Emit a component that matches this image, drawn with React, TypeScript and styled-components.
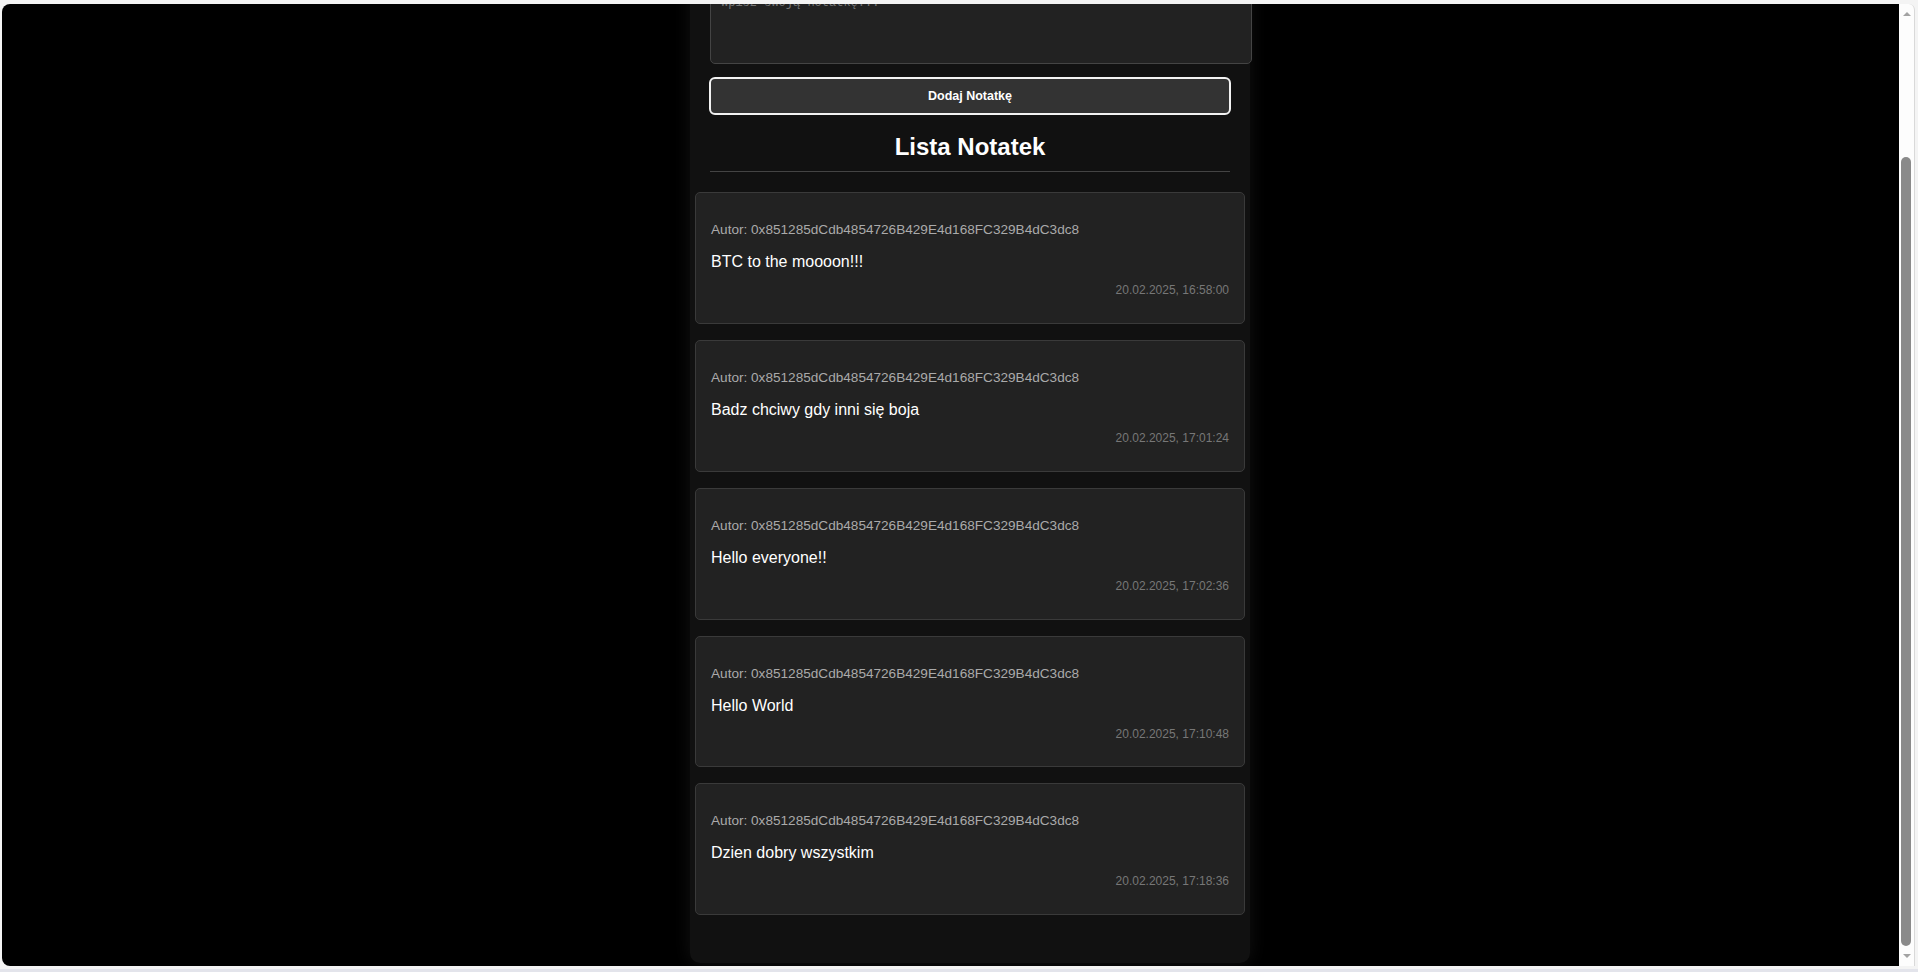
import React from "react";
import styled, { createGlobalStyle } from "styled-components";

const Global = createGlobalStyle`
  html, body { margin: 0; padding: 0; background: #f3f3f3; }
  * { box-sizing: border-box; }
`;

const Frame = styled.div`
  display: flex;
  height: 972px;
  padding: 4px 3px 3px 2px;
  background: #f4f4f4;
  border-bottom: 3px solid #e3e4eb;
`;

const Viewport = styled.main`
  flex: 1;
  display: flex;
  justify-content: center;
  align-items: flex-end;
  padding: 0 0 3px 39px;
  background: #000;
  border-radius: 8px 0 0 8px;
  overflow: hidden;
  font-family: "Liberation Sans", Arial, sans-serif;
`;

const Panel = styled.section`
  flex: 0 0 560px;
  display: flex;
  flex-direction: column;
  padding: 0 20px 48px;
  background: #111;
  border-radius: 0 0 10px 10px;
  box-shadow: 0 0 18px rgba(255, 255, 255, 0.07);
`;

const NoteInput = styled.textarea`
  display: block;
  box-sizing: content-box;
  width: 100%;
  height: 57px;
  padding: 10px;
  margin: 0;
  background: #222;
  color: #ddd;
  border: 1px solid #444;
  border-radius: 5px;
  resize: none;
  font-family: "Liberation Mono", monospace;
  font-size: 12px;
  &::placeholder { color: #757575; }
`;

const AddButton = styled.button`
  display: block;
  width: calc(100% + 2px);
  height: 38px;
  margin: 13px 0 0 -1px;
  background: #333;
  color: #fff;
  border: 2px solid #f2f2f2;
  border-radius: 6px;
  font-family: "Liberation Sans", Arial, sans-serif;
  font-size: 12.5px;
  font-weight: bold;
  cursor: pointer;
`;

const Title = styled.h2`
  margin: 18px 0 0;
  padding-bottom: 10px;
  border-bottom: 1px solid #444;
  color: #fff;
  font-size: 24px;
  line-height: 28px;
  font-weight: bold;
  text-align: center;
`;

const NoteList = styled.div`
  display: flex;
  flex-direction: column;
  gap: 16px;
  margin: 20px -15px 0;
`;

const Card = styled.article`
  display: flex;
  flex-direction: column;
  padding: 15px;
  background: #222;
  border: 1px solid #3a3a3a;
  border-radius: 5px;
`;

const Author = styled.p`
  margin: 14px 0 0;
  color: #aaa;
  font-size: 13.6px;
  line-height: 16px;
`;

const Content = styled.p`
  margin: 15px 0 0;
  color: #fff;
  font-size: 16px;
  line-height: 18px;
`;

const Stamp = styled.small`
  display: block;
  margin: 12px 0 10.75px;
  color: #777;
  font-size: 12px;
  line-height: 14px;
  text-align: right;
`;

const ScrollBar = styled.div`
  flex: 0 0 16px;
  display: flex;
  flex-direction: column;
  background: #fdfdfd;
  border-right: 1px solid #d9d9d9;
  border-top-right-radius: 6px;
`;

const Arrow = styled.div<{ $down?: boolean }>`
  flex: 0 0 20px;
  display: flex;
  align-items: center;
  justify-content: center;
  &::after {
    content: "";
    width: 0;
    height: 0;
    border-left: 4px solid transparent;
    border-right: 4px solid transparent;
    ${(p) => (p.$down ? "border-top: 4px solid #a3a3a3;" : "border-bottom: 4px solid #a3a3a3;")}
  }
`;

const Track = styled.div`
  flex: 1;
  display: flex;
  flex-direction: column;
  padding: 133px 3px 0 2px;
`;

const Thumb = styled.div`
  flex: 1;
  background: #8a8a8a;
  border-radius: 5px;
`;

const AUTHOR = "0x851285dCdb4854726B429E4d168FC329B4dC3dc8";

const notes = [
  { text: "BTC to the moooon!!!", time: "20.02.2025, 16:58:00" },
  { text: "Badz chciwy gdy inni się boja", time: "20.02.2025, 17:01:24" },
  { text: "Hello everyone!!", time: "20.02.2025, 17:02:36" },
  { text: "Hello World", time: "20.02.2025, 17:10:48" },
  { text: "Dzien dobry wszystkim", time: "20.02.2025, 17:18:36" },
];

export default function App() {
  return (
    <>
      <Global />
      <Frame>
        <Viewport>
          <Panel>
            <NoteInput placeholder="Wpisz swoją notatkę..." />
            <AddButton>Dodaj Notatkę</AddButton>
            <Title>Lista Notatek</Title>
            <NoteList>
              {notes.map((n) => (
                <Card key={n.time}>
                  <Author>Autor: {AUTHOR}</Author>
                  <Content>{n.text}</Content>
                  <Stamp>{n.time}</Stamp>
                </Card>
              ))}
            </NoteList>
          </Panel>
        </Viewport>
        <ScrollBar>
          <Arrow />
          <Track>
            <Thumb />
          </Track>
          <Arrow $down />
        </ScrollBar>
      </Frame>
    </>
  );
}
